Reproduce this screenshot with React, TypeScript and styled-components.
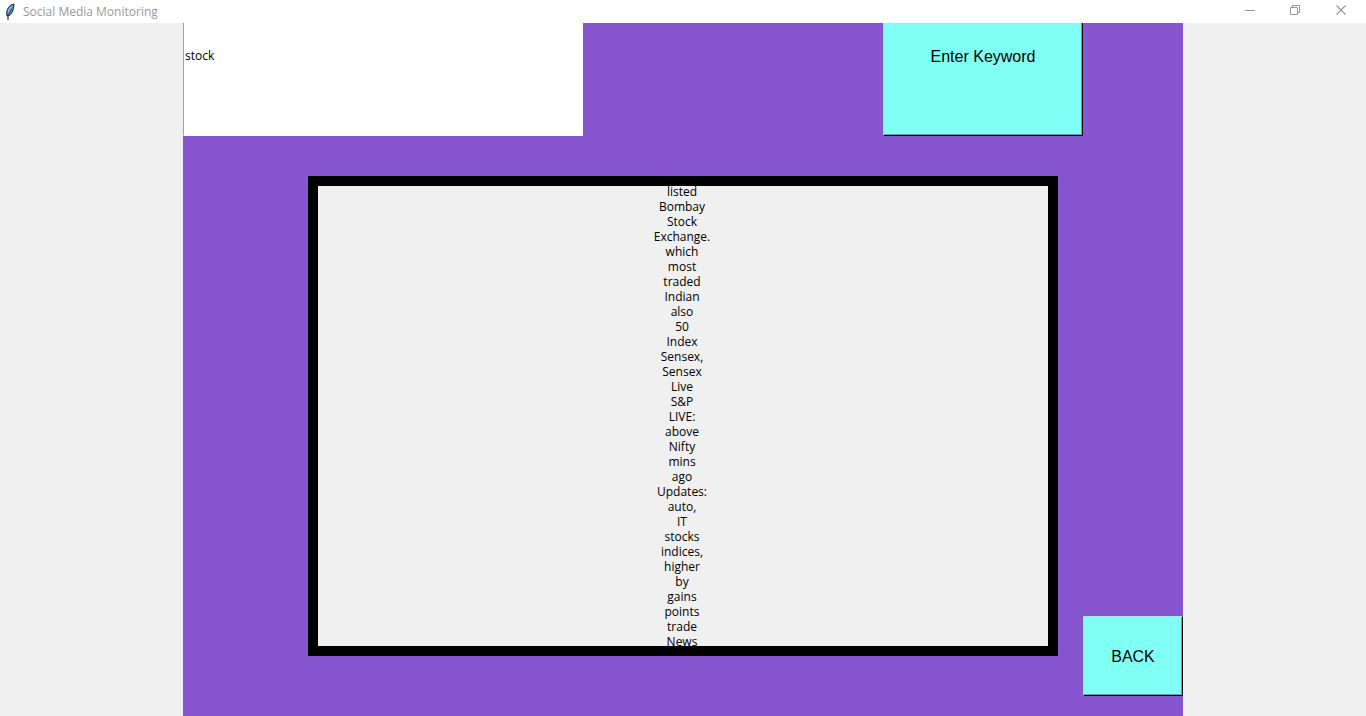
import React, { useState } from "react";
import styled, { createGlobalStyle } from "styled-components";

const GlobalStyle = createGlobalStyle`
  *, *::before, *::after { box-sizing: border-box; }
  body {
    margin: 0;
    background: #f0f0f0;
    color: #000;
    font-family: "Open Sans", "Noto Sans", sans-serif;
    font-size: 12px;
  }
`;

const Window = styled.div`
  min-height: 100vh;
  display: flex;
  flex-direction: column;
`;

const TitleBar = styled.header`
  height: 23px;
  flex: none;
  display: flex;
  align-items: center;
  padding: 0 2px 0 4px;
  background: #fff;
`;

const Title = styled.h1`
  margin: 0 auto 0 7px;
  color: #999;
  font-size: 12px;
  font-weight: 400;
  line-height: 23px;
`;

const WindowButton = styled.button`
  width: 46px;
  height: 23px;
  padding: 0 0 2px;
  border: 0;
  background: transparent;
  color: #999;
  display: flex;
  align-items: center;
  justify-content: center;
`;

const Stage = styled.main`
  width: 100%;
  max-width: 1000px;
  margin: 0 auto;
  flex: 1;
  background: #8855d0;
`;

const SearchRow = styled.form`
  height: 113px;
  display: grid;
  grid-template-columns: 40% 20%;
  column-gap: 30%;
`;

const KeywordInput = styled.input`
  width: 100%;
  height: 100%;
  padding: 0 1px 47px;
  border: 1px solid #fff;
  border-width: 0 1px 1px;
  border-left-color: #a0a0a0;
  border-radius: 0;
  background: #fff;
  color: #000;
  font: inherit;
  outline: 0;
`;

const RaisedButton = styled.button`
  padding: 2px 0 0;
  border: 1px solid #000;
  border-left-color: #a4e4f4;
  border-top-color: #a4e4f4;
  border-radius: 0;
  background: #80fff5;
  box-shadow: inset -1px -1px #5aa8a0;
  color: #000;
  font-family: "Liberation Sans", Arial, sans-serif;
  font-size: 16px;
  line-height: 18px;
`;

const KeywordButton = styled(RaisedButton)`
  padding: 0 0 44px;
  border-top: 0;
`;

const BackButton = styled(RaisedButton)`
  width: 100px;
  height: 80px;
  align-self: end;
  justify-self: end;
`;

const Results = styled.section`
  display: grid;
  grid-template-columns: 1fr 75% 1fr;
  padding: 40px 0 20px;
`;

const WordPanel = styled.div`
  grid-column: 2;
  height: 480px;
  margin-bottom: 40px;
  padding-right: 2px;
  border: 10px solid #000;
  background: #f0f0f0;
  overflow: hidden;
  display: flex;
  align-items: center;
  justify-content: center;
`;

const WordList = styled.ul`
  flex: none;
  margin: 0;
  padding: 0;
  list-style: none;
  text-align: center;
  line-height: 15px;
`;

const words = [
  "listed", "Bombay", "Stock", "Exchange.", "which", "most", "traded", "Indian",
  "also", "50", "Index", "Sensex,", "Sensex", "Live", "S&P", "LIVE:", "above",
  "Nifty", "mins", "ago", "Updates:", "auto,", "IT", "stocks", "indices,",
  "higher", "by", "gains", "points", "trade", "News",
];

const Feather = () => (
  <svg width="12" height="17" viewBox="0 0 12 17" aria-hidden="true">
    <path
      d="M10 1C7 1.500 4.500 3.500 3.400 6.500C2.600 9 2.400 11 3 13L5.500 12.500C8 10.500 9.600 7 10 1Z"
      fill="#5f8fc4"
      stroke="#16202c"
      strokeWidth="1"
    />
    <path d="M8.500 2.500C6.500 4 5 6 4.200 9.500" fill="none" stroke="#a9c8e4" strokeWidth="1" />
    <path d="M7.800 6C6.500 8 5.200 10 4.500 12" fill="none" stroke="#2b4f7a" strokeWidth="1" />
    <path d="M4 12V17" fill="none" stroke="#0c1118" strokeWidth="1" />
  </svg>
);

const MinimizeIcon = () => (
  <svg width="11" height="11" viewBox="0 0 11 11" aria-hidden="true">
    <path d="M1 5.500H11" stroke="currentColor" />
  </svg>
);

const RestoreIcon = () => (
  <svg width="11" height="11" viewBox="0 0 11 11" fill="none" stroke="currentColor" aria-hidden="true">
    <path d="M0.500 2.500H7.500V9.500H0.500ZM2.500 2.500V0.500H9.500V7.500H7.500" />
  </svg>
);

const CloseIcon = () => (
  <svg width="11" height="11" viewBox="0 0 11 11" aria-hidden="true">
    <path d="M0.500 0.500L9.500 9.500M9.500 0.500L0.500 9.500" stroke="currentColor" strokeWidth="1.200" />
  </svg>
);

export default function App() {
  const [keyword, setKeyword] = useState("stock");

  return (
    <Window>
      <GlobalStyle />
      <TitleBar>
        <Feather />
        <Title>Social Media Monitoring</Title>
        <WindowButton type="button" aria-label="Minimize"><MinimizeIcon /></WindowButton>
        <WindowButton type="button" aria-label="Restore"><RestoreIcon /></WindowButton>
        <WindowButton type="button" aria-label="Close"><CloseIcon /></WindowButton>
      </TitleBar>
      <Stage>
        <SearchRow onSubmit={(event) => event.preventDefault()}>
          <KeywordInput
            type="text"
            aria-label="Keyword"
            value={keyword}
            onChange={(event) => setKeyword(event.target.value)}
          />
          <KeywordButton type="submit">Enter Keyword</KeywordButton>
        </SearchRow>
        <Results>
          <WordPanel>
            <WordList>
              {words.map((word) => (
                <li key={word}>{word}</li>
              ))}
            </WordList>
          </WordPanel>
          <BackButton type="button">BACK</BackButton>
        </Results>
      </Stage>
    </Window>
  );
}
